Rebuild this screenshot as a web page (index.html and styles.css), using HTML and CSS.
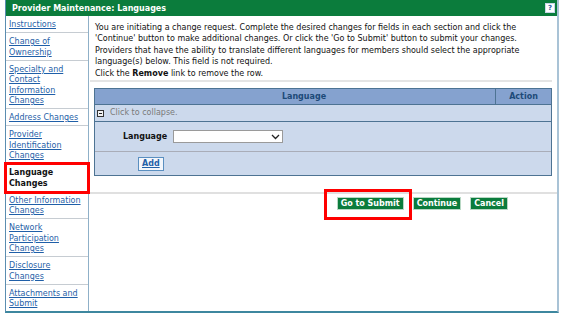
FILE: index.html
```html
<!DOCTYPE html>
<html>
<head>
<meta charset="utf-8">
<link rel="stylesheet" href="styles.css">
</head>
<body>
<div class="page">
  <div class="titlebar">
    <span class="title">Provider Maintenance: Languages</span>
    <span class="help">?</span>
  </div>
  <div class="layout">
    <nav class="sidebar">
      <a class="nav-item" href="#">Instructions</a>
      <a class="nav-item" href="#">Change of Ownership</a>
      <a class="nav-item" href="#">Specialty and Contact Information Changes</a>
      <a class="nav-item" href="#">Address Changes</a>
      <a class="nav-item" href="#">Provider Identification Changes</a>
      <span class="nav-item current">Language Changes</span>
      <a class="nav-item" href="#">Other Information Changes</a>
      <a class="nav-item" href="#">Network Participation Changes</a>
      <a class="nav-item" href="#">Disclosure Changes</a>
      <a class="nav-item last" href="#">Attachments and Submit</a>
    </nav>
    <main class="main">
      <div class="intro">
        <p>You are initiating a change request. Complete the desired changes for fields in each section and click the 'Continue' button to make additional changes. Or click the 'Go to Submit' button to submit your changes.</p>
        <p>Providers that have the ability to translate different languages for members should select the appropriate language(s) below. This field is not required.</p>
        <p>Click the <b>Remove</b> link to remove the row.</p>
      </div>
      <div class="sep"></div>
      <div class="grid">
        <div class="grid-head">
          <div class="col-lang">Language</div>
          <div class="col-action">Action</div>
        </div>
        <div class="grid-collapse"><span class="minus"></span>Click to collapse.</div>
        <div class="grid-field">
          <label class="field-label">Language</label>
          <div class="select"><svg width="9" height="6" viewBox="0 0 9 6"><path d="M1 1l3.5 3.5L8 1" fill="none" stroke="#222" stroke-width="1.3"/></svg></div>
        </div>
        <div class="grid-add"><span class="add-btn">Add</span></div>
      </div>
      <div class="spacer"></div>
      <div class="sep2"></div>
      <div class="actions">
        <span class="btn submit">Go to Submit</span>
        <span class="btn">Continue</span>
        <span class="btn">Cancel</span>
      </div>
    </main>
  </div>
</div>
</body>
</html>
```

FILE: styles.css
```css
html, body {
  margin: 0;
  padding: 0;
  background: #ffffff;
}
body {
  font-family: "DejaVu Sans", Verdana, sans-serif;
  font-size: 8px;
  color: #111;
}
.page {
  margin-left: 5px;
  width: 551px;
  border-left: 1px solid #5b8db0;
  border-right: 2px solid #a9c3d6;
  border-bottom: 2px solid #3d879f;
}
.titlebar {
  height: 16px;
  background: #0b7c3c;
  display: flex;
  align-items: center;
  justify-content: space-between;
  padding: 0 2px 0 6px;
}
.title {
  color: #fff;
  font-weight: bold;
  font-size: 8px;
}
.help {
  width: 8px;
  height: 8px;
  background: #fff;
  border: 1px solid #c8d8e8;
  color: #2a5aa0;
  font-size: 7px;
  font-weight: bold;
  line-height: 8px;
  text-align: center;
}
.layout {
  display: flex;
}
.sidebar {
  width: 82px;
  border-right: 1px solid #8fb0c8;
  display: flex;
  flex-direction: column;
}
.nav-item {
  display: block;
  padding: 4px 2px 1.5px 3px;
  line-height: 10.5px;
  color: #1f5fa8;
  text-decoration: underline;
  border-bottom: 1px solid #c6ccd2;
}
.nav-item.last {
  border-bottom: none;
}
.nav-item.current {
  color: #111;
  font-weight: bold;
  text-decoration: none;
  outline: 3px solid #ff0000;
  outline-offset: -1px;
  position: relative;
}
.main {
  flex: 1;
  display: flex;
  flex-direction: column;
}
.intro {
  padding: 5.5px 6px 0 6px;
}
.intro p {
  margin: 0 0 1px 0;
  line-height: 11px;
}
.sep {
  margin: 0.5px 5px 0 1px;
  height: 2px;
  background: #e4e4e4;
}
.grid {
  margin: 6px 5px 0 5px;
  border: 1px solid #4d7393;
  background: #ccd9ec;
}
.grid-head {
  display: flex;
  height: 15px;
  background: #85a2cf;
  border-bottom: 1px solid #4d7393;
  color: #1d4a78;
  font-weight: bold;
  line-height: 15px;
}
.col-lang {
  flex: 1;
  text-align: center;
  padding-left: 18px;
}
.col-action {
  width: 55px;
  text-align: center;
  border-left: 1px solid #4d7393;
}
.grid-collapse {
  height: 16px;
  line-height: 16px;
  border-bottom: 1px solid #4d7393;
  color: #7a7a7a;
  display: flex;
  align-items: center;
  padding-left: 2px;
}
.minus {
  width: 5px;
  height: 5px;
  border: 1px solid #333;
  margin-right: 6px;
  position: relative;
  background: #f2f2f2;
}
.minus::after {
  content: "";
  position: absolute;
  left: 1px;
  right: 1px;
  top: 2px;
  height: 1px;
  background: #222;
}
.grid-field {
  height: 29px;
  border-bottom: 1px solid #a9adb8;
  display: flex;
  align-items: center;
  padding-left: 28px;
}
.field-label {
  font-weight: bold;
  font-size: 8px;
  margin-right: 6px;
  color: #111;
}
.select {
  width: 106px;
  height: 11px;
  background: #fff;
  border: 1px solid #9a9a9a;
  display: flex;
  align-items: center;
  justify-content: flex-end;
  padding-right: 2px;
}
.grid-add {
  height: 23px;
  display: flex;
  align-items: center;
  padding-left: 43px;
}
.add-btn {
  background: #f3f6fb;
  border: 1px solid #5a8fc0;
  color: #1f5fa8;
  font-weight: bold;
  text-decoration: underline;
  padding: 1px 3px;
  line-height: 10px;
}
.spacer {
  height: 16px;
}
.sep2 {
  height: 2px;
  background: #e0e0e0;
  margin-left: 1px;
}
.actions {
  display: flex;
  justify-content: flex-end;
  gap: 9px;
  padding: 3px 49px 0 0;
}
.btn {
  background: #0b7c3c;
  color: #fff;
  font-weight: bold;
  border: 1px solid #b8d8c4;
  padding: 0 3px;
  line-height: 11px;
}
.btn.submit {
  position: relative;
}
.btn.submit::after {
  content: "";
  position: absolute;
  left: -14px;
  right: -9px;
  top: -9px;
  bottom: -11px;
  border: 3px solid #ff0000;
}
```
